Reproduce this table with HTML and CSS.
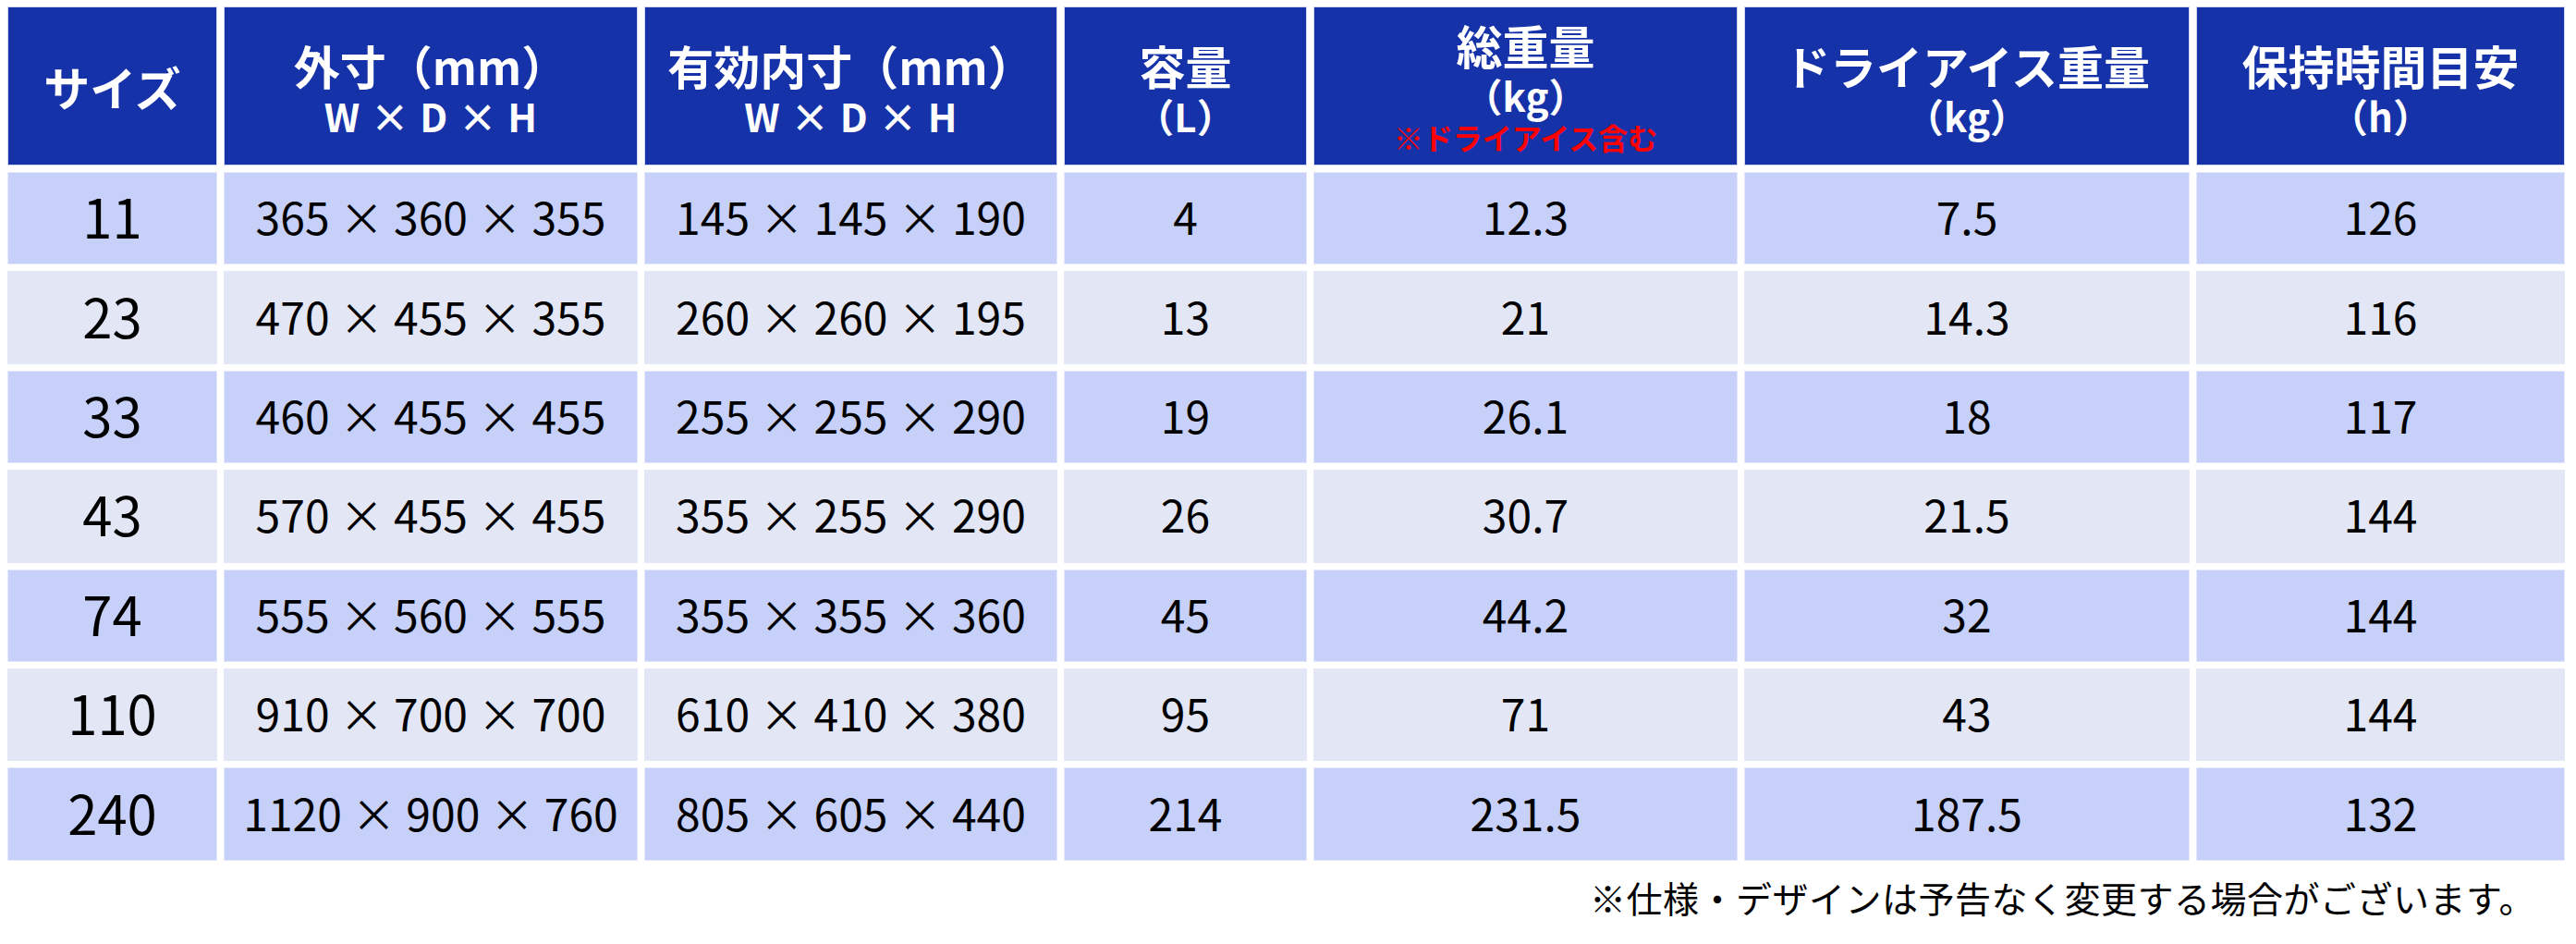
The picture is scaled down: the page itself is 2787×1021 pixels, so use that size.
FILE: index.html
```html
<!DOCTYPE html>
<html lang="ja">
<head>
<meta charset="utf-8">
<title>サイズ一覧</title>
<link rel="stylesheet" href="styles.css">
</head>
<body>
<table class="spec">
  <colgroup>
    <col class="c1"><col class="c2"><col class="c3"><col class="c4"><col class="c5"><col class="c6"><col class="c7">
  </colgroup>
  <thead>
    <tr>
      <th><span class="l1">サイズ</span></th>
      <th class="multi"><span class="l1">外寸（mm）</span><span class="l2">W × D × H</span></th>
      <th class="multi"><span class="l1">有効内寸（mm）</span><span class="l2">W × D × H</span></th>
      <th class="multi"><span class="l1">容量</span><span class="l2">（L）</span></th>
      <th><span class="l1">総重量</span><span class="l2">（kg）</span><span class="note">※ドライアイス含む</span></th>
      <th class="multi"><span class="l1">ドライアイス重量</span><span class="l2">（kg）</span></th>
      <th class="multi"><span class="l1">保持時間目安</span><span class="l2">（h）</span></th>
    </tr>
  </thead>
  <tbody>
    <tr class="odd"><td class="size">11</td><td class="dim">365 × 360 × 355</td><td class="dim">145 × 145 × 190</td><td>4</td><td>12.3</td><td>7.5</td><td>126</td></tr>
    <tr class="even"><td class="size">23</td><td class="dim">470 × 455 × 355</td><td class="dim">260 × 260 × 195</td><td>13</td><td>21</td><td>14.3</td><td>116</td></tr>
    <tr class="odd"><td class="size">33</td><td class="dim">460 × 455 × 455</td><td class="dim">255 × 255 × 290</td><td>19</td><td>26.1</td><td>18</td><td>117</td></tr>
    <tr class="even"><td class="size">43</td><td class="dim">570 × 455 × 455</td><td class="dim">355 × 255 × 290</td><td>26</td><td>30.7</td><td>21.5</td><td>144</td></tr>
    <tr class="odd"><td class="size">74</td><td class="dim">555 × 560 × 555</td><td class="dim">355 × 355 × 360</td><td>45</td><td>44.2</td><td>32</td><td>144</td></tr>
    <tr class="even"><td class="size">110</td><td class="dim">910 × 700 × 700</td><td class="dim">610 × 410 × 380</td><td>95</td><td>71</td><td>43</td><td>144</td></tr>
    <tr class="odd"><td class="size">240</td><td class="dim">1120 × 900 × 760</td><td class="dim">805 × 605 × 440</td><td>214</td><td>231.5</td><td>187.5</td><td>132</td></tr>
  </tbody>
</table>
<p class="footnote">※仕様・デザインは予告なく変更する場合がございます。</p>
</body>
</html>
```

FILE: styles.css
```css
html, body {
  margin: 0;
  padding: 0;
  background: #ffffff;
}

body {
  font-family: "Noto Sans CJK JP", "Noto Sans", sans-serif;
  color: #000000;
}

.spec {
  table-layout: fixed;
  border-collapse: separate;
  border-spacing: 7px;
  width: 2781px;
  margin: 0 0 0 1px;
}

.c1 { width: 227px; }
.c2 { width: 448px; }
.c3 { width: 447px; }
.c4 { width: 263px; }
.c5 { width: 459px; }
.c6 { width: 482px; }
.c7 { width: 399px; }

.spec th {
  height: 172px;
  padding: 0;
  background: #1532a8;
  border: 1px solid #cfd5ee;
  color: #ffffff;
  font-weight: 700;
  text-align: center;
  vertical-align: middle;
  box-sizing: border-box;
}

.spec th.multi {
  padding-top: 7px;
}

.spec th span {
  display: block;
  white-space: nowrap;
}

.spec .l1 {
  font-size: 50px;
  line-height: 56px;
}

.spec .l2 {
  font-size: 42px;
  line-height: 54px;
  word-spacing: 2px;
}

.spec .note {
  font-size: 32px;
  line-height: 36px;
  color: #ff0000;
}

.spec td {
  height: 100.4px;
  padding: 0 0 6px 0;
  border: 1px solid #e4e8f8;
  text-align: center;
  vertical-align: middle;
  font-size: 48px;
  font-weight: 400;
  white-space: nowrap;
  box-sizing: border-box;
}

.spec .odd td {
  background: #c6d0f8;
}

.spec .even td {
  background: #e2e6f5;
}

.spec td.size {
  font-size: 58px;
}

.footnote {
  margin: 7px 0 0 0;
  padding: 0 44px 0 0;
  text-align: right;
  font-size: 39px;
  letter-spacing: 0.5px;
  line-height: 51px;
  color: #000000;
}
```
